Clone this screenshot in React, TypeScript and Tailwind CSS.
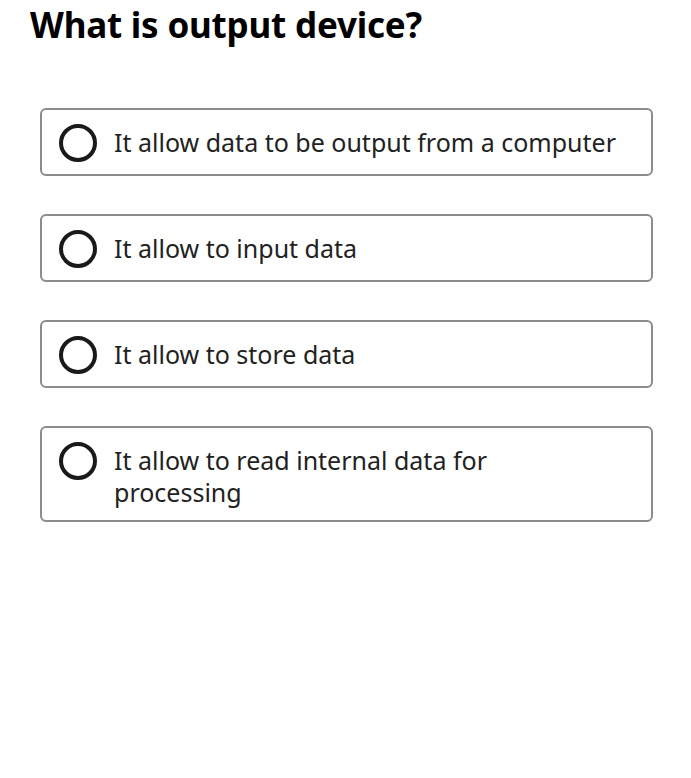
import React from "react";

const options = [
  "It allow data to be output from a computer",
  "It allow to input data",
  "It allow to store data",
  "It allow to read internal data for processing",
];

export default function App() {
  return (
    <div
      className="w-[691px] h-[778px] bg-white text-[#1a1a1a]"
      style={{ fontFamily: '"Noto Sans", "Open Sans", sans-serif' }}
    >
      <h1 className="pl-[30px] pt-[2px] text-[35px] font-bold leading-[46px] text-black tracking-[-0.2px]">
        What is output device?
      </h1>
      <div className="mt-[60px] ml-[40px] w-[613px] flex flex-col gap-[38px]">
        {options.map((o) => (
          <div
            key={o}
            className="min-h-[68px] border-2 border-[#8c8c8c] rounded-[6px] flex items-start pl-[17px] pr-[20px] pt-[16px] pb-[12px]"
          >
            <div className="w-[38px] h-[38px] shrink-0 rounded-full border-[4px] border-[#1a1a1a] mt-[-2px] mb-[-4px]" />
            <div className="ml-[17px] max-w-[505px] text-[25px] leading-[32px] text-[#222]">{o}</div>
          </div>
        ))}
      </div>
    </div>
  );
}
